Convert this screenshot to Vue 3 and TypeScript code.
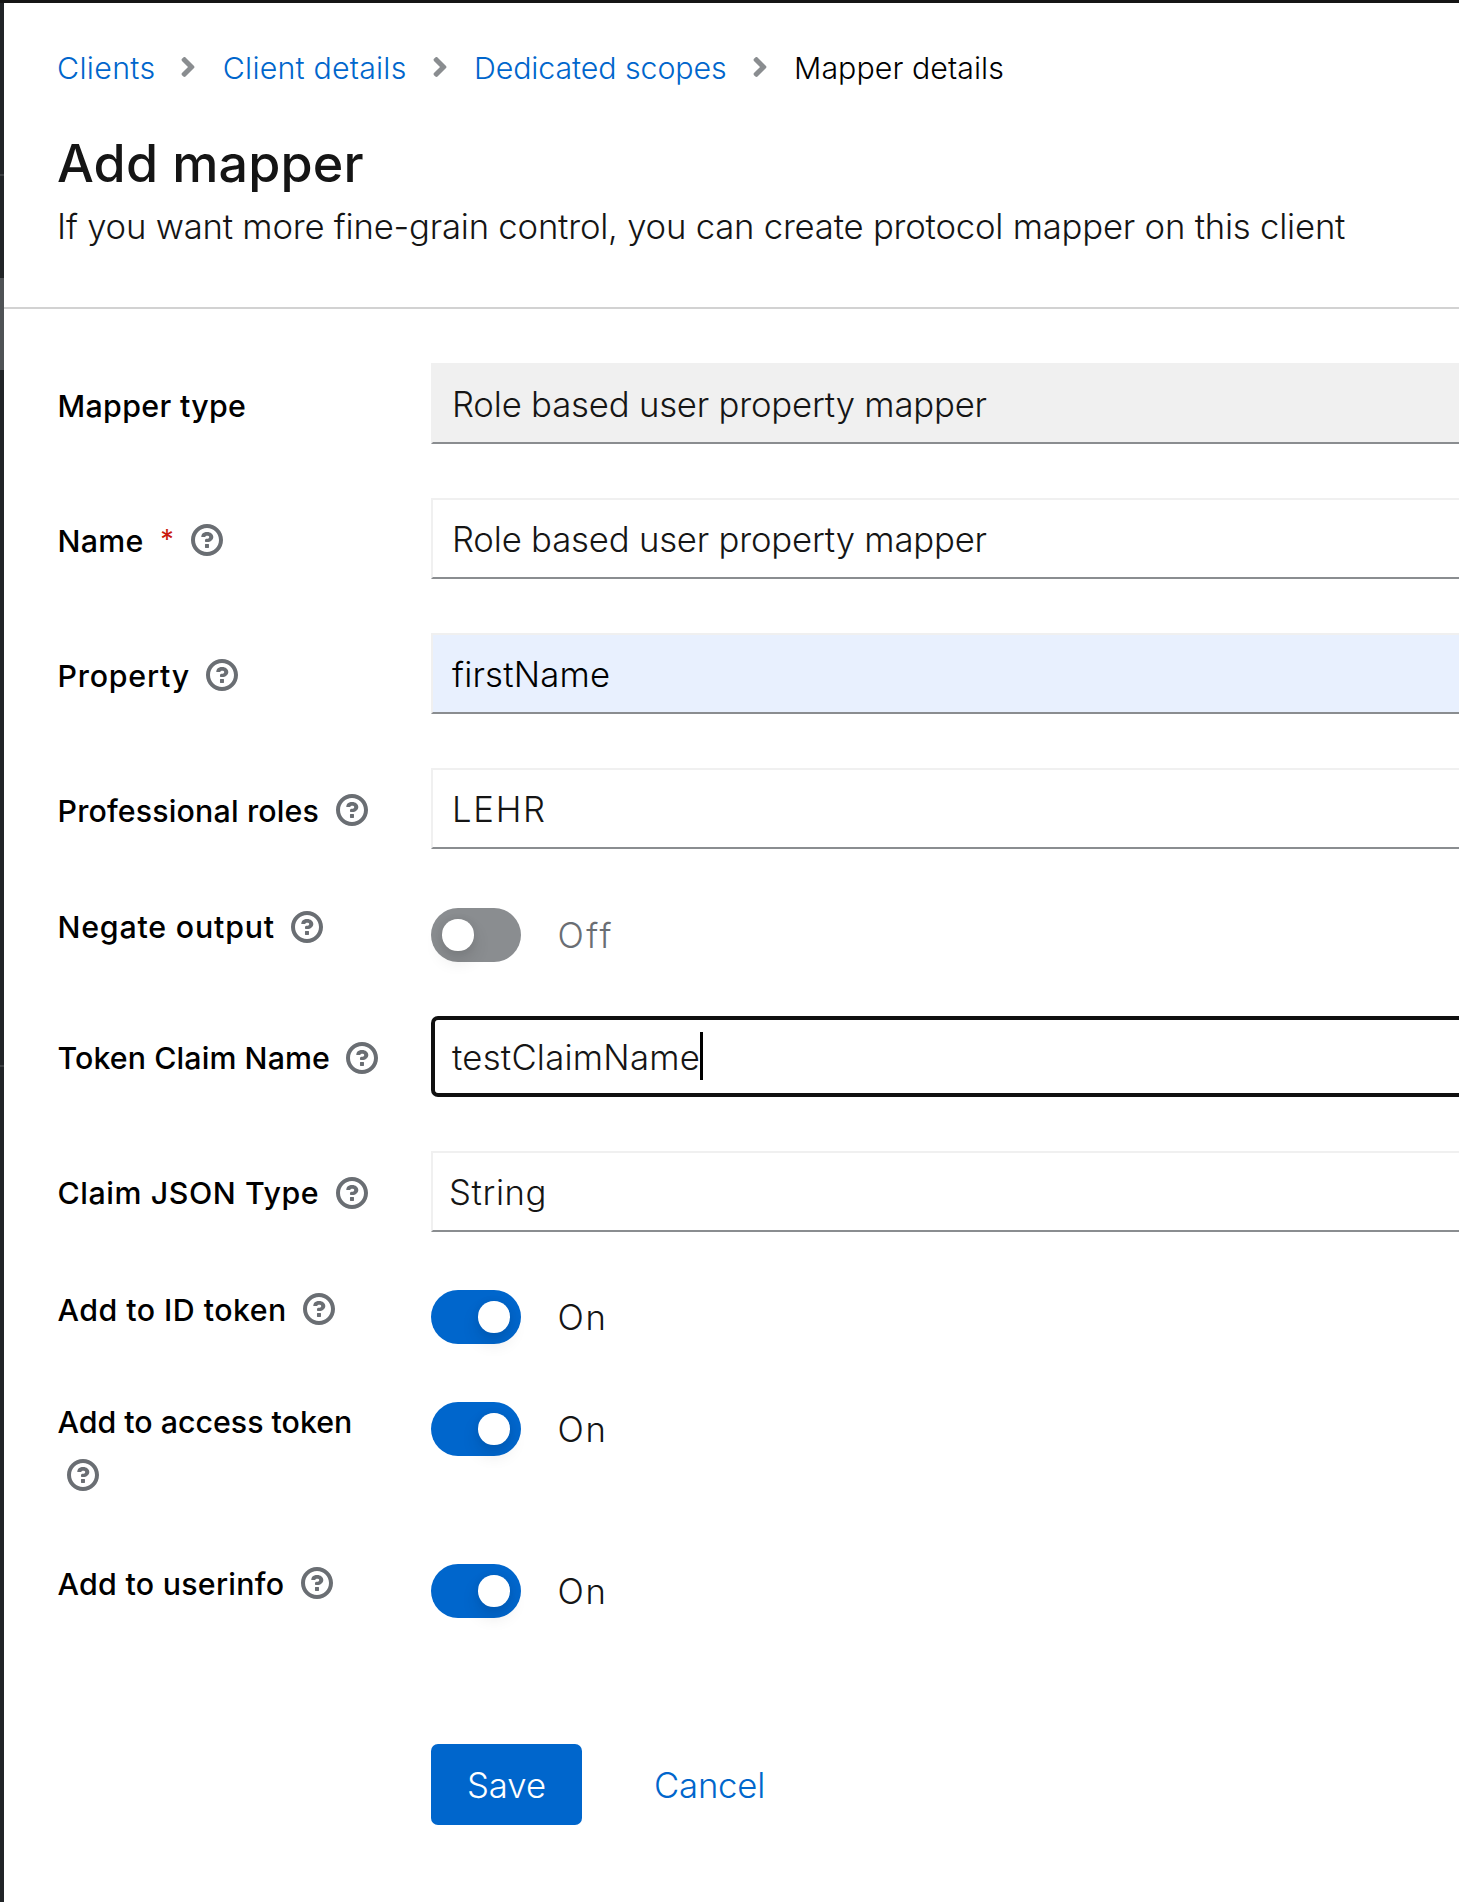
<script setup lang="ts">
import { h, type FunctionalComponent } from 'vue'

interface Text {
  text: string
  /** letter spacing in px */
  ls: number
}

interface Row {
  id: string
  label: Text
  help?: boolean
  required?: boolean
  kind: 'input' | 'switch'
  state?: 'readonly' | 'autofill' | 'focus' | 'select' | 'on' | 'off'
  value: Text
}

const crumbs: Text[] = [
  { text: 'Clients', ls: 0.33 },
  { text: 'Client details', ls: 0.2 },
  { text: 'Dedicated scopes', ls: -0.08 },
  { text: 'Mapper details', ls: 0.05 },
]

const on: Text = { text: 'On', ls: 1.8 }
const mapper: Text = { text: 'Role based user property mapper', ls: -0.19 }

const rows: Row[] = [
  { id: 'type', label: { text: 'Mapper type', ls: 0.33 }, kind: 'input', state: 'readonly', value: mapper },
  { id: 'name', label: { text: 'Name', ls: 0.3 }, help: true, required: true, kind: 'input', value: mapper },
  { id: 'property', label: { text: 'Property', ls: 0.78 }, help: true, kind: 'input', state: 'autofill', value: { text: 'firstName', ls: 0.2 } },
  { id: 'roles', label: { text: 'Professional roles', ls: 0.16 }, help: true, kind: 'input', value: { text: 'LEHR', ls: 1.7 } },
  { id: 'negate', label: { text: 'Negate output', ls: 0.8 }, help: true, kind: 'switch', state: 'off', value: { text: 'Off', ls: 2.4 } },
  { id: 'claim', label: { text: 'Token Claim Name', ls: 0.09 }, help: true, kind: 'input', state: 'focus', value: { text: 'testClaimName', ls: 0.24 } },
  { id: 'json', label: { text: 'Claim JSON Type', ls: 0.57 }, help: true, kind: 'input', state: 'select', value: { text: 'String', ls: 0.6 } },
  { id: 'id', label: { text: 'Add to ID token', ls: 0.46 }, help: true, kind: 'switch', state: 'on', value: on },
  { id: 'access', label: { text: 'Add to access token', ls: -0.01 }, help: true, kind: 'switch', state: 'on', value: on },
  { id: 'userinfo', label: { text: 'Add to userinfo', ls: 0.27 }, help: true, kind: 'switch', state: 'on', value: on },
]

const HelpIcon: FunctionalComponent = () =>
  h('svg', { viewBox: '0 0 1024 1024', fill: 'currentColor', 'aria-hidden': 'true' }, [
    h('path', {
      d: 'M521.3,576 C627.5,576 713.7,502 713.7,413.7 C713.7,325.4 627.6,253.6 521.3,253.6 C366,253.6 334.5,337.7 329.2,407.2 C329.2,414.3 335.2,416 343.5,416 L445,416 C450.5,416 458,415.5 460.8,406.5 C460.8,362.6 582.9,357.1 582.9,413.6 C582.9,441.9 556.2,470.9 521.3,473 C486.4,475.1 447.3,485.8 447.3,521.7 L447.3,553.8 C447.3,570.8 456.1,576 472,576 C487.9,576 521.3,576 521.3,576 M575.3,751.3 L575.3,655.3 C575.3,651 573.6,647 570.6,644 C567.6,641 563.5,639.3 559.3,639.3 L463.3,639.3 C459,639.3 455,641 452,644 C449,647 447.3,651 447.3,655.3 L447.3,751.3 C447.3,755.5 449,759.6 452,762.6 C455,765.6 459,767.3 463.3,767.3 L559.3,767.3 C563.5,767.3 567.6,765.6 570.6,762.6 C573.6,759.6 575.3,755.5 575.3,751.3 M512,896 C300.2,896 128,723.9 128,512 C128,300.3 300.2,128 512,128 C723.8,128 896,300.2 896,512 C896,723.8 723.7,896 512,896 M512.1,0 C229.7,0 0,229.8 0,512 C0,794.2 229.8,1024 512.1,1024 C794.4,1024 1024,794.3 1024,512 C1024,229.7 794.4,0 512.1,0',
    }),
  ])

const spacing = (t: Text) => ({ letterSpacing: `${t.ls}px` })
</script>

<template>
  <div class="page">
    <div class="masthead"></div>
    <div class="body">
      <aside class="sidebar">
        <i class="sep first"></i>
        <i class="current"></i>
        <i class="sep second"></i>
      </aside>
      <main class="main">
        <header class="header">
          <nav class="crumbs">
            <template v-for="(c, i) in crumbs" :key="c.text">
              <svg v-if="i > 0" class="chevron" viewBox="0 0 256 512" aria-hidden="true">
                <path d="M224.3 273l-136 136c-9.4 9.4-24.6 9.4-33.9 0l-22.6-22.6c-9.4-9.4-9.4-24.6 0-33.9l96.4-96.4-96.4-96.4c-9.4-9.4-9.4-24.6 0-33.9L54.3 103c9.4-9.4 24.6-9.4 33.9 0l136 136c9.5 9.4 9.5 24.6.1 34z" />
              </svg>
              <a v-if="i < crumbs.length - 1" class="crumb link" :style="spacing(c)">{{ c.text }}</a>
              <span v-else class="crumb" :style="spacing(c)">{{ c.text }}</span>
            </template>
          </nav>
          <h1 class="title">Add mapper</h1>
          <p class="subtitle">If you want more fine-grain control, you can create protocol mapper on this client</p>
        </header>

        <form class="form">
          <div v-for="r in rows" :key="r.id" class="row" :class="[r.kind, r.id]">
            <label class="label">
              <span class="label-text" :style="spacing(r.label)">{{ r.label.text }}</span>
              <span v-if="r.required" class="required">*</span>
              <HelpIcon v-if="r.help" class="help" />
            </label>
            <div v-if="r.kind === 'input'" class="field" :class="r.state">
              <span :style="spacing(r.value)">{{ r.value.text }}</span>
              <i v-if="r.state === 'focus'" class="caret"></i>
            </div>
            <div v-else class="switch-wrap">
              <span class="toggle" :class="r.state"><i class="knob"></i></span>
              <span class="toggle-label" :class="r.state" :style="spacing(r.value)">{{ r.value.text }}</span>
            </div>
          </div>
          <div class="actions">
            <button type="button" class="save">Save</button>
            <button type="button" class="cancel">Cancel</button>
          </div>
        </form>
      </main>
    </div>
  </div>
</template>

<style>
body {
  background: #fff;
}
</style>

<style scoped>
.page {
  height: 1902px;
  display: flex;
  flex-direction: column;
  overflow: hidden;
  background: #fff;
  color: #151515;
  font-family: Inter, "Open Sans", sans-serif;
  font-size: 34.7px;
  font-weight: 300;
}
.masthead {
  height: 3px;
  flex: none;
  background: #151515;
}
.body {
  flex: 1;
  display: flex;
  min-height: 0;
}
.sidebar {
  width: 4px;
  flex: none;
  display: flex;
  flex-direction: column;
  background: #212427;
}
.sep {
  height: 2px;
  background: #3c3f42;
}
.first {
  margin-top: 171px;
}
.current {
  height: 92px;
  margin-top: 102px;
  background: #4f5255;
}
.second {
  margin-top: 695px;
}
.main {
  flex: 1;
  min-width: 0;
}
.header {
  padding: 42px 54px 54px 53px;
  border-bottom: 2px solid #d2d2d2;
}
.crumbs {
  display: flex;
  align-items: center;
  height: 46px;
  font-size: 30.35px;
  line-height: 46px;
  white-space: nowrap;
}
.crumb {
  color: #000;
}
.link {
  color: #06c;
}
.chevron {
  width: 16px;
  height: 32px;
  margin: 0 26.4px 2px 25px;
  fill: #8a8d90;
  flex: none;
}
.title {
  margin: 38px 0 0;
  font-size: 52px;
  line-height: 70px;
  font-weight: 480;
  letter-spacing: 0.15px;
}
.subtitle {
  margin: 0;
  line-height: 54px;
  letter-spacing: -0.22px;
  white-space: nowrap;
}
.form {
  padding: 54px 0 0 54px;
  display: flex;
  flex-direction: column;
  gap: 54px;
}
.row {
  display: grid;
  grid-template-columns: 373px 1fr;
}
.label {
  display: flex;
  flex-wrap: wrap;
  align-items: center;
  max-width: 330px;
  margin-left: -0.5px;
  color: #000;
  font-size: 30.35px;
  font-weight: 500;
  line-height: 52px;
}
.label-text {
  padding-top: 2px;
  margin-right: 7.5px;
  white-space: nowrap;
}
.required {
  margin-left: 9px;
  margin-right: 8.5px;
  color: #c9190b;
  font-size: 27px;
  font-weight: 400;
}
.help {
  width: 32px;
  height: 32px;
  margin: 11px 0 11px 9px;
  color: #6a6e73;
}
.input .label {
  padding-top: 3px;
}
.claim .label-text,
.json .label-text,
.negate .label-text {
  padding-top: 0;
  padding-bottom: 1px;
}
.field {
  box-sizing: border-box;
  display: flex;
  align-items: center;
  height: 81px;
  padding: 0 0 0 19px;
  border: 2px solid #f0f0f0;
  border-right: 0;
  border-bottom-color: #8a8d90;
  white-space: nowrap;
}
.readonly {
  background: #f0f0f0;
}
.autofill {
  background: #e8f0fe;
  color: #000;
}
.select {
  padding-left: 16px;
}
.focus {
  padding-left: 17px;
  border: 4px solid #101010;
  border-right: 0;
  border-radius: 7px 0 0 7px;
}
.caret {
  width: 3px;
  height: 48px;
  margin-bottom: 1px;
  background: #000;
}
.switch {
  min-height: 58px;
}
.negate {
  margin-top: 1px;
}
.switch .label {
  align-self: start;
  margin-top: -4px;
  padding-bottom: 4px;
}
.switch-wrap {
  display: flex;
  align-items: center;
  height: 54px;
  margin-top: 4px;
}
.toggle {
  box-sizing: border-box;
  display: flex;
  align-items: center;
  width: 90px;
  height: 54px;
  padding: 0 11.25px;
  border-radius: 27px;
  background: #8a8d90;
}
.toggle.on {
  justify-content: flex-end;
  background: #06c;
}
.knob {
  width: 31.5px;
  height: 31.5px;
  border-radius: 50%;
  background: #fff;
  box-shadow: 0 9px 18px rgba(3, 3, 3, 0.12), 0 0 9px rgba(3, 3, 3, 0.06);
}
.toggle-label {
  margin-left: 36.5px;
}
.toggle-label.off {
  color: #6a6e73;
}
.actions {
  display: flex;
  gap: 36px;
  margin: 72px 0 0 373px;
}
.save,
.cancel {
  height: 81px;
  padding: 0;
  border: 0;
  border-radius: 7px;
  background: none;
  color: #06c;
  font: inherit;
}
.save {
  width: 151px;
  background: #06c;
  color: #fff;
}
.cancel {
  padding-left: 36px;
  letter-spacing: -0.2px;
}
</style>
